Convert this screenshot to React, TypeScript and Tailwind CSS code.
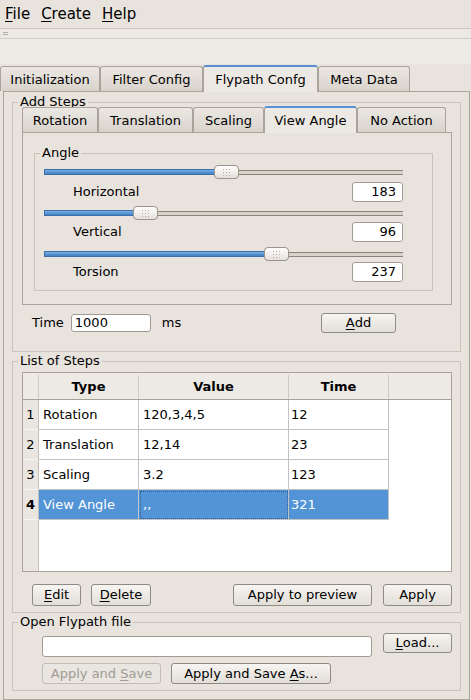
import React from 'react';

const font = { fontFamily: '"DejaVu Sans", Verdana, sans-serif' };

function Mn({ children }: { children: React.ReactNode }) {
    return <span className="underline underline-offset-[2px] decoration-[1px]">{children}</span>;
}

function Btn({ className, disabled, children }: { className: string; disabled?: boolean; children: React.ReactNode }) {
    return (
        <div
            className={`flex items-center justify-center rounded-[3px] border ${
                disabled
                    ? 'border-[#c2bcb4] bg-[#e9e5e0] text-[#a19b94]'
                    : 'border-[#8f8a82] bg-gradient-to-b from-[#f7f5f2] to-[#e2ded8] text-black'
            } ${className}`}
        >
            {children}
        </div>
    );
}

function Tab({ label, w, active }: { label: string; w: string; active?: boolean }) {
    if (active) {
        return (
            <div
                className={`${w} relative z-10 -mb-px flex h-[27px] items-center justify-center rounded-t-[3px] border-x border-t-2 border-x-[#aaa39a] border-t-[#5a8fd2] bg-[#ece8e3]`}
            >
                {label}
            </div>
        );
    }
    return (
        <div
            className={`${w} flex h-[25px] items-center justify-center rounded-t-[3px] border-x border-t border-[#aaa39a] bg-gradient-to-b from-[#ebe7e2] to-[#d9d3cc] pt-[2px]`}
        >
            {label}
        </div>
    );
}

function Slider({ value }: { value: number }) {
    const span = 359 - 25;
    const left = Math.round((value / 360) * span);
    return (
        <div className="relative flex h-[14px] w-[359px] items-center">
            <div className="h-[5px] w-full border-y border-[#8a8379] bg-[#d8d2ca]" />
            <div
                className="absolute left-0 top-[4px] h-[6px] border border-[#3e6fa8] bg-gradient-to-b from-[#7bb0e4] to-[#3d7fc6]"
                style={{ width: left + 4 }}
            />
            <div
                className="absolute top-0 flex h-[14px] w-[25px] items-center justify-center rounded-[4px] border border-[#9a948a] bg-gradient-to-b from-[#ffffff] to-[#e4e0db]"
                style={{ left }}
            >
                <div className="grid grid-cols-3 gap-[2px]">
                    {Array.from({ length: 9 }).map((_, i) => (
                        <div key={i} className="h-px w-px bg-[#b4aea6]" />
                    ))}
                </div>
            </div>
        </div>
    );
}

function SpinRow({ label, value }: { label: string; value: number }) {
    return (
        <div className="flex h-[20px] w-[359px] items-center justify-between">
            <span className="ml-[29px]">{label}</span>
            <div className="flex h-[20px] w-[51px] items-center justify-end rounded-[3px] border border-[#a19b92] bg-white pr-[6px]">
                {value}
            </div>
        </div>
    );
}

// title sits on the top border, like a Qt group box
function Group({ title, className, inner, children }: { title: string; className: string; inner: string; children: React.ReactNode }) {
    return (
        <fieldset className={`border border-[#c9c3ba] ${className}`}>
            <legend className="ml-[5px] px-[2px] leading-[14px]">{title}</legend>
            <div className={inner}>{children}</div>
        </fieldset>
    );
}

const rows = [
    { n: 1, type: 'Rotation', value: '120,3,4,5', time: '12' },
    { n: 2, type: 'Translation', value: '12,14', time: '23' },
    { n: 3, type: 'Scaling', value: '3.2', time: '123' },
    { n: 4, type: 'View Angle', value: ',,', time: '321', sel: true },
];

function StepsTable() {
    return (
        <div className="flex h-[200px] w-[430px] flex-col border border-[#a7a198] bg-white">
            <div className="flex h-[27px] border-b border-[#a7a198] bg-[#edeae5] pt-[2px] font-bold">
                <div className="w-[16px] border-r border-[#cfc9c1]" />
                <div className="flex w-[100px] items-center justify-center border-r border-[#cfc9c1]">Type</div>
                <div className="flex w-[150px] items-center justify-center border-r border-[#cfc9c1]">Value</div>
                <div className="flex w-[100px] items-center justify-center border-r border-[#cfc9c1]">Time</div>
                <div className="flex-1" />
            </div>
            {rows.map((r) => (
                <div key={r.n} className="flex h-[30px]">
                    <div
                        className={`flex w-[16px] items-center justify-center border-b border-r border-b-[#f7f5f2] border-r-[#c4beb6] bg-[#e9e5e0] ${
                            r.sel ? 'font-bold' : ''
                        }`}
                    >
                        {r.n}
                    </div>
                    <div
                        className={`flex w-[100px] items-center border-b border-r border-[#c3c3c3] pl-[4px] ${
                            r.sel ? 'bg-[#5294d6] text-white' : ''
                        }`}
                    >
                        {r.type}
                    </div>
                    <div
                        className={`flex w-[150px] items-center border-b border-r border-[#c3c3c3] pl-[4px] ${
                            r.sel ? 'bg-[#5294d6] text-white outline-1 -outline-offset-2 outline-dotted outline-[#2f5d92]' : ''
                        }`}
                    >
                        {r.value}
                    </div>
                    <div
                        className={`flex w-[100px] items-center border-b border-r border-[#c3c3c3] pl-[2px] ${
                            r.sel ? 'bg-[#5294d6] text-white' : ''
                        }`}
                    >
                        {r.time}
                    </div>
                    <div className="flex-1" />
                </div>
            ))}
            <div className="flex flex-1">
                <div className="w-[16px] border-r border-[#c4beb6] bg-[#e9e5e0]" />
                <div className="flex-1" />
            </div>
        </div>
    );
}

export default function App() {
    return (
        <div className="flex h-[700px] w-[471px] flex-col overflow-hidden bg-[#e8e3dd] text-[13px] text-black" style={font}>
            {/* menu bar */}
            <div className="flex h-[29px] items-center gap-[11px] border-b border-[#cdc7bf] pl-[5px] text-[15px]">
                <span>
                    <Mn>F</Mn>ile
                </span>
                <span>
                    <Mn>C</Mn>reate
                </span>
                <span>
                    <Mn>H</Mn>elp
                </span>
            </div>
            {/* toolbar handle */}
            <div className="flex h-[10px] flex-col justify-center gap-px border-b border-[#d2ccc4] bg-[#ece8e3] pl-[3px]">
                <div className="h-px w-[5px] bg-[#b6b0a8]" />
                <div className="h-px w-[5px] bg-[#b6b0a8]" />
            </div>
            <div className="h-[25px] bg-[#eeebe6]" />

            {/* main tabs */}
            <div className="flex h-[27px] items-end">
                <Tab label="Initialization" w="w-[100px]" />
                <Tab label="Filter Config" w="w-[103px]" />
                <Tab label="Flypath Confg" w="w-[115px]" active />
                <Tab label="Meta Data" w="w-[92px]" />
            </div>

            <div className="ml-[3px] mr-[1px] flex-1 border border-[#aaa39a] pt-[3px]">
                <Group title="Add Steps" className="mx-[8px]" inner="pb-[18px] pl-[9px] pr-[8px]">
                    <div className="-mt-[3px] flex h-[26px] items-end">
                        <Tab label="Rotation" w="w-[76px]" />
                        <Tab label="Translation" w="w-[95px]" />
                        <Tab label="Scaling" w="w-[71px]" />
                        <Tab label="View Angle" w="w-[93px]" active />
                        <Tab label="No Action" w="w-[89px]" />
                    </div>
                    <div className="h-[173px] border border-[#aaa39a] pt-[13px]">
                        <Group title="Angle" className="ml-[11px] mr-[18px]" inner="pb-[8px] pl-[9px]">
                            <div className="mt-[5px] flex flex-col">
                                <Slider value={183} />
                                <div className="mt-[3px]">
                                    <SpinRow label="Horizontal" value={183} />
                                </div>
                                <div className="mt-[4px]">
                                    <Slider value={96} />
                                </div>
                                <div className="mt-[2px]">
                                    <SpinRow label="Vertical" value={96} />
                                </div>
                                <div className="mt-[5px]">
                                    <Slider value={237} />
                                </div>
                                <div className="mt-px">
                                    <SpinRow label="Torsion" value={237} />
                                </div>
                            </div>
                        </Group>
                    </div>
                    <div className="mt-[8px] flex h-[20px] items-center">
                        <span className="ml-[10px]">Time</span>
                        <div className="ml-[7px] flex h-[18px] w-[80px] items-center rounded-[3px] border border-[#a19b92] bg-white pl-[3px]">
                            1000
                        </div>
                        <span className="ml-[11px]">ms</span>
                        <Btn className="ml-auto mr-[56px] h-[20px] w-[75px]">
                            <Mn>A</Mn>dd
                        </Btn>
                    </div>
                </Group>

                <Group title="List of Steps" className="mx-[8px] mt-[2px]" inner="pb-[6px] pl-[9px] pr-[8px]">
                    <div className="mt-[4px]">
                        <StepsTable />
                    </div>
                    <div className="mt-[12px] flex h-[22px]">
                        <Btn className="ml-[10px] w-[49px]">
                            <Mn>E</Mn>dit
                        </Btn>
                        <Btn className="ml-[10px] w-[60px]">
                            <Mn>D</Mn>elete
                        </Btn>
                        <Btn className="ml-auto w-[139px]">Apply to preview</Btn>
                        <Btn className="ml-[11px] w-[69px]">Apply</Btn>
                    </div>
                </Group>

                <Group title="Open Flypath file" className="mx-[8px] mt-[2px]" inner="pb-[6px] pl-[29px] pr-[8px]">
                    <div className="mt-[4px] flex items-start">
                        <div className="mt-[3px] h-[21px] w-[330px] rounded-[3px] border border-[#a19b92] bg-white" />
                        <Btn className="ml-auto h-[20px] w-[69px]">
                            <Mn>L</Mn>oad...
                        </Btn>
                    </div>
                    <div className="mt-[6px] flex">
                        <Btn disabled className="h-[21px] w-[119px]">
                            Apply and&nbsp;<Mn>S</Mn>ave
                        </Btn>
                        <Btn className="ml-[10px] h-[21px] w-[160px]">
                            Apply and Save&nbsp;<Mn>A</Mn>s...
                        </Btn>
                    </div>
                </Group>
            </div>
        </div>
    );
}
